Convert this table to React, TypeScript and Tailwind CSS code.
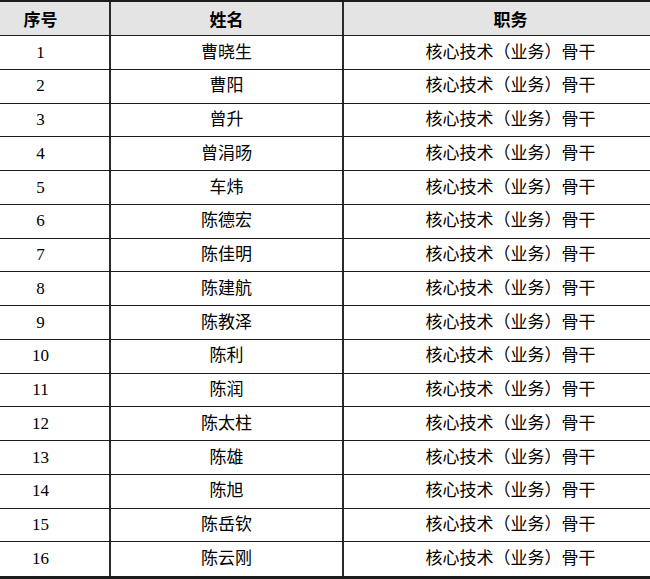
import React from "react";

// 名单数据
const rows = [
  "曹晓生",
  "曹阳",
  "曾升",
  "曾涓旸",
  "车炜",
  "陈德宏",
  "陈佳明",
  "陈建航",
  "陈教泽",
  "陈利",
  "陈润",
  "陈太柱",
  "陈雄",
  "陈旭",
  "陈岳钦",
  "陈云刚",
];

const cjk = "font-['Liberation_Serif','Noto_Sans_CJK_SC',serif]";

export default function App() {
  return (
    <div className="w-[650px] h-[579px] overflow-hidden bg-white text-black">
      <div className="border-t-2 border-b-[3px] border-[#1c1c1c]">
        {/* 表头 */}
        <div className="flex h-[34px] bg-[#e4e4e4] border-b border-[#1c1c1c] font-['Noto_Sans_CJK_SC',sans-serif] font-bold text-[17px]">
          <div className="w-[109px] pr-[28px] flex items-center justify-center">序号</div>
          <div className="w-[233px] border-l-2 border-[#2a2a2a] flex items-center justify-center">姓名</div>
          <div className="flex-1 pl-[27px] border-l-2 border-[#2a2a2a] flex items-center justify-center">职务</div>
        </div>

        {/* 数据行 */}
        {rows.map((name, idx) => (
          <div
            key={idx}
            className={`flex h-[33.75px] text-[17px] ${cjk} ${idx < rows.length - 1 ? "border-b border-[#1c1c1c]" : ""}`}
          >
            <div className="w-[109px] pr-[28px] flex items-center justify-center">{idx + 1}</div>
            <div className="w-[233px] border-l-2 border-[#2a2a2a] flex items-center justify-center">{name}</div>
            <div className="flex-1 pl-[27px] border-l-2 border-[#2a2a2a] flex items-center justify-center">
              核心技术（业务）骨干
            </div>
          </div>
        ))}
      </div>
    </div>
  );
}
